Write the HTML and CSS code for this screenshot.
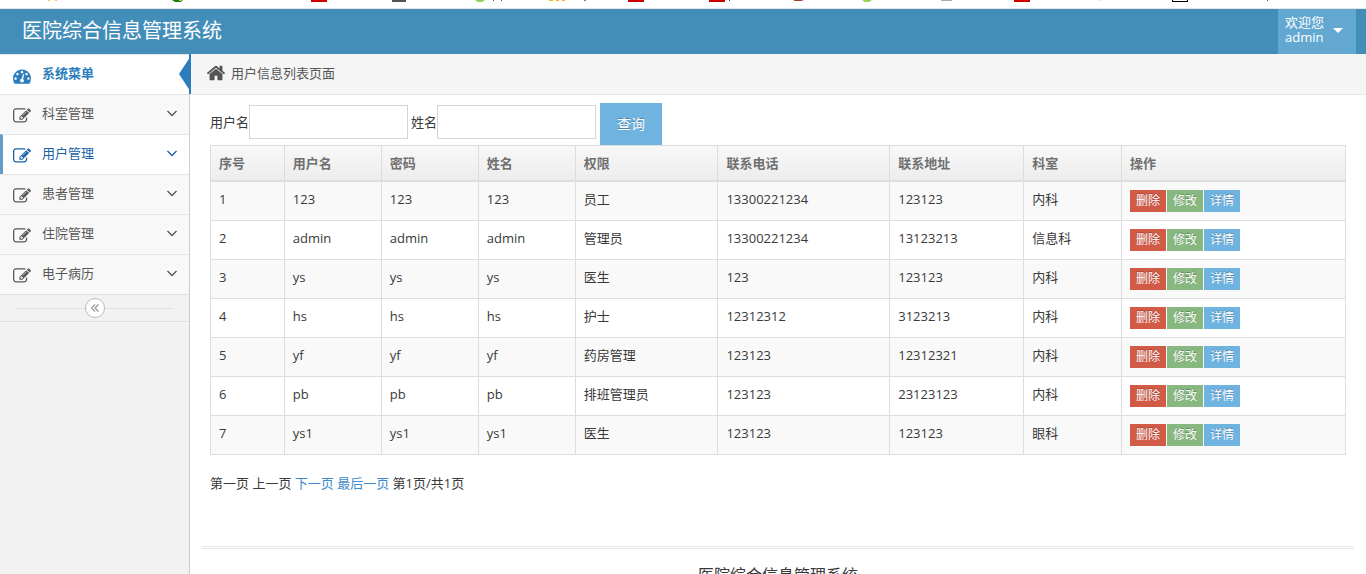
FILE: index.html
```html
<!DOCTYPE html>
<html lang="zh-CN">
<head>
<meta charset="utf-8">
<title>医院综合信息管理系统</title>
<link rel="stylesheet" href="styles.css">
</head>
<body>
<svg class="defs" width="0" height="0" aria-hidden="true">
  <symbol id="i-dash" viewBox="0 0 1792 1792"><path d="M384 1152q0-53-37.500-90.500t-90.500-37.500-90.500 37.500-37.500 90.500 37.500 90.500 90.500 37.500 90.500-37.500 37.500-90.500zm192-448q0-53-37.500-90.500t-90.500-37.500-90.500 37.500-37.500 90.500 37.500 90.500 90.500 37.500 90.500-37.500 37.500-90.500zm428 481l101-382q6-26-7.500-48.500t-38.500-29.500-48 6.500-30 39.500l-101 382q-60 5-107 43.500t-63 98.500q-20 77 20 146t117 89 146-20 89-117q16-60-6-117t-72-91zm660-33q0-53-37.500-90.500t-90.500-37.500-90.500 37.500-37.500 90.500 37.500 90.500 90.500 37.500 90.500-37.500 37.500-90.500zm-640-640q0-53-37.500-90.500t-90.500-37.500-90.500 37.500-37.500 90.500 37.500 90.500 90.500 37.500 90.500-37.500 37.500-90.500zm448 192q0-53-37.500-90.500t-90.500-37.500-90.500 37.500-37.500 90.500 37.500 90.500 90.500 37.500 90.500-37.500 37.500-90.500zm320 448q0 261-141 483-19 29-54 29h-1402q-35 0-54-29-141-221-141-483 0-182 71-348t191-286 286-191 348-71 348 71 286 191 191 286 71 348z"/></symbol>
  <symbol id="i-edit" viewBox="0 0 1792 1792"><path d="M888 1184l116-116-152-152-116 116v56h96v96h56zm440-720q-16-16-33 1l-350 350q-17 17-1 33t33-1l350-350q17-17 1-33zm80 594v190q0 119-84.500 203.500t-203.500 84.500h-832q-119 0-203.500-84.500t-84.500-203.500v-832q0-119 84.500-203.500t203.500-84.500h832q63 0 117 25 15 7 18 23 3 17-9 29l-49 49q-14 14-32 8-23-6-45-6h-832q-66 0-113 47t-47 113v832q0 66 47 113t113 47h832q66 0 113-47t47-113v-126q0-13 9-22l64-64q15-15 35-7t20 29zm-96-738l288 288-672 672h-288v-288zm444 132l-92 92-288-288 92-92q28-28 68-28t68 28l152 152q28 28 28 68t-28 68z"/></symbol>
  <symbol id="i-home" viewBox="0 0 1792 1792"><path d="M1472 992v480q0 26-19 45t-45 19h-384v-384h-256v384h-384q-26 0-45-19t-19-45v-480q0-1 .5-3t.5-3l575-474 575 474q1 2 1 6zm223-69l-62 74q-8 9-21 11h-3q-13 0-21-7l-692-577-692 577q-12 8-24 7-13-2-21-11l-62-74q-8-10-7-23.500t11-21.500l719-599q32-26 76-26t76 26l244 204v-195q0-14 9-23t23-9h192q14 0 23 9t9 23v408l219 182q10 8 11 21.500t-7 23.500z"/></symbol>
  <symbol id="i-down" viewBox="0 0 10 7"><path d="M.5 1L5 5.500 9.500 1" fill="none" stroke="currentColor" stroke-width="1.400"/></symbol>
</svg>

<svg class="strip" width="1366" height="8" aria-hidden="true">
  <path fill="#fcc25c" d="M48 0h2v1h-2zM55 0h2v1h-2z"/>
  <path fill="#1d7a12" d="M172 0h11l-2 2h-6z"/><path fill="#b6cf3c" d="M179 0h4l-2 1h-2z"/>
  <path fill="#c00" d="M311 0h16v2h-16zM628 0h16v2h-16zM709 0h16v2h-16zM1014 0h16v2h-16z"/>
  <path fill="#555" d="M392 0h14v2h-14z"/>
  <path fill="#92d050" d="M475 0h10l-3 2h-4zM862 0h10l-3 2h-4z"/>
  <path fill="#555" d="M493 0h1v1h-1zM501 0h1v1h-1zM1267 0h1v1h-1z"/>
  <path fill="#fbb017" d="M549 0h4v1h-4zM556 0h3v1h-3zM562 0h3v1h-3z"/>
  <path fill="#b07040" d="M584 0h2v1h-2z"/><path fill="#247" d="M729 0h1v1h-1z"/>
  <path fill="#a43d23" d="M793 0h11l-3 1h-6z"/>
  <path fill="#aaa" d="M941 0h11v1h-11z"/><path fill="#eee" d="M1097 0h5v1h-5z"/>
  <path fill="#000" d="M1172 0h1v1h14v-1h1v2h-16z"/>
</svg>

<header class="navbar">
  <div class="brand">医院综合信息管理系统</div>
  <button class="user" type="button"><span>欢迎您<br>admin</span><i class="caret"></i></button>
</header>

<div class="shell">
  <aside class="sidebar">
    <nav class="menu">
      <a class="item current" href="#"><svg class="icon"><use href="#i-dash"/></svg><span>系统菜单</span></a>
      <a class="item" href="#"><svg class="icon"><use href="#i-edit"/></svg><span>科室管理</span><svg class="arrow"><use href="#i-down"/></svg></a>
      <a class="item open" href="#"><svg class="icon"><use href="#i-edit"/></svg><span>用户管理</span><svg class="arrow"><use href="#i-down"/></svg></a>
      <a class="item" href="#"><svg class="icon"><use href="#i-edit"/></svg><span>患者管理</span><svg class="arrow"><use href="#i-down"/></svg></a>
      <a class="item" href="#"><svg class="icon"><use href="#i-edit"/></svg><span>住院管理</span><svg class="arrow"><use href="#i-down"/></svg></a>
      <a class="item" href="#"><svg class="icon"><use href="#i-edit"/></svg><span>电子病历</span><svg class="arrow"><use href="#i-down"/></svg></a>
    </nav>
    <div class="collapse">
      <button type="button" aria-label="收起菜单"><svg width="10" height="10" viewBox="0 0 10 10"><path d="M5 1.500L1.500 5 5 8.500M8.500 1.500L5 5 8.500 8.500" fill="none" stroke="#999" stroke-width="1.300"/></svg></button>
    </div>
  </aside>

  <main class="main">
    <div class="crumbs"><svg class="icon"><use href="#i-home"/></svg><span>用户信息列表页面</span></div>
    <div class="content">
      <form class="search">
        <div class="field"><label for="uname">用户名</label><input id="uname" type="text"></div>
        <div class="field"><label for="rname">姓名</label><input id="rname" type="text"></div>
        <button class="query" type="button">查询</button>
      </form>
      <table class="grid">
        <colgroup><col class="c-no"><col class="c-id"><col class="c-id"><col class="c-id"><col class="c-role"><col class="c-tel"><col class="c-addr"><col class="c-dept"><col></colgroup>
        <thead><tr><th>序号</th><th>用户名</th><th>密码</th><th>姓名</th><th>权限</th><th>联系电话</th><th>联系地址</th><th>科室</th><th>操作</th></tr></thead>
        <tbody>
          <tr><td>1</td><td>123</td><td>123</td><td>123</td><td>员工</td><td>13300221234</td><td>123123</td><td>内科</td><td><div class="ops"><button class="del" type="button">删除</button><button class="mod" type="button">修改</button><button class="info" type="button">详情</button></div></td></tr>
          <tr><td>2</td><td>admin</td><td>admin</td><td>admin</td><td>管理员</td><td>13300221234</td><td>13123213</td><td>信息科</td><td><div class="ops"><button class="del" type="button">删除</button><button class="mod" type="button">修改</button><button class="info" type="button">详情</button></div></td></tr>
          <tr><td>3</td><td>ys</td><td>ys</td><td>ys</td><td>医生</td><td>123</td><td>123123</td><td>内科</td><td><div class="ops"><button class="del" type="button">删除</button><button class="mod" type="button">修改</button><button class="info" type="button">详情</button></div></td></tr>
          <tr><td>4</td><td>hs</td><td>hs</td><td>hs</td><td>护士</td><td>12312312</td><td>3123213</td><td>内科</td><td><div class="ops"><button class="del" type="button">删除</button><button class="mod" type="button">修改</button><button class="info" type="button">详情</button></div></td></tr>
          <tr><td>5</td><td>yf</td><td>yf</td><td>yf</td><td>药房管理</td><td>123123</td><td>12312321</td><td>内科</td><td><div class="ops"><button class="del" type="button">删除</button><button class="mod" type="button">修改</button><button class="info" type="button">详情</button></div></td></tr>
          <tr><td>6</td><td>pb</td><td>pb</td><td>pb</td><td>排班管理员</td><td>123123</td><td>23123123</td><td>内科</td><td><div class="ops"><button class="del" type="button">删除</button><button class="mod" type="button">修改</button><button class="info" type="button">详情</button></div></td></tr>
          <tr><td>7</td><td>ys1</td><td>ys1</td><td>ys1</td><td>医生</td><td>123123</td><td>123123</td><td>眼科</td><td><div class="ops"><button class="del" type="button">删除</button><button class="mod" type="button">修改</button><button class="info" type="button">详情</button></div></td></tr>
        </tbody>
      </table>
      <div class="pager">第一页 上一页 <a href="#">下一页</a> <a href="#">最后一页</a> 第1页/共1页</div>
    </div>
    <footer class="footer">医院综合信息管理系统</footer>
  </main>
</div>
</body>
</html>
```
FILE: styles.css
```css
* { box-sizing: border-box; }

body {
  margin: 0;
  height: 100vh;
  overflow: hidden;
  display: flex;
  flex-direction: column;
  background: #fff;
  color: #393939;
  font: 13px/18px "Open Sans", "Noto Sans CJK SC", sans-serif;
}

button, input { font: inherit; border-radius: 0; }
button { border: 0; padding: 0; cursor: pointer; }
a { color: #428bca; text-decoration: none; }
svg { flex: none; }
.defs { position: absolute; }
.strip { display: block; }

.navbar {
  flex: none;
  display: flex;
  justify-content: space-between;
  height: 46px;
  padding: 0 10px 0 22px;
  border-top: 1px solid #e6e6e6;
  background: #438eb9;
  color: #fff;
}
.brand { font-size: 20px; line-height: 44px; }
.user {
  display: flex;
  align-items: center;
  gap: 9px;
  width: 78px;
  padding: 0 7px 4px;
  background: #62a8d1;
  color: #fff;
  line-height: 15px;
  text-align: left;
}
.caret {
  margin-top: 2px;
  border: 5px solid transparent;
  border-top-color: #fff;
  border-bottom: 0;
}

.shell { flex: 1; display: flex; min-height: 0; }
.sidebar {
  flex: none;
  width: 190px;
  border-right: 1px solid #ccc;
  background: #f2f2f2;
}
.icon { width: 18px; height: 18px; fill: currentColor; }
.item {
  display: flex;
  align-items: center;
  height: 40px;
  padding: 0 12px 2px 13px;
  border-top: 1px solid #e5e5e5;
  background: #f8f8f8;
  color: #585858;
}
.item .icon { margin: 4px 11px 0 0; }
.item span { flex: 1; padding-bottom: 2px; }
.arrow { width: 10px; height: 7px; }
.item.current {
  position: relative;
  background: #fff;
  color: #2b7dbc;
  font-weight: 700;
}
.item.current::after {
  content: "";
  position: absolute;
  top: -1px;
  right: -2px;
  width: 12px;
  height: 40px;
  background: #2b7dbc;
  clip-path: polygon(0 50%, 83% 12%, 83% 0, 100% 0, 100% 100%, 83% 100%, 83% 88%);
}
.item.open {
  padding-left: 10px;
  border-left: 3px solid #629cc9;
  background: #fff;
  color: #1963aa;
}
.collapse {
  display: flex;
  align-items: center;
  height: 28px;
  padding: 0 15px;
  border-top: 1px solid #e0e0e0;
  border-bottom: 1px solid #e0e0e0;
}
.collapse::before, .collapse::after {
  content: "";
  flex: 1;
  height: 1px;
  background: #e0e0e0;
}
.collapse button {
  display: flex;
  align-items: center;
  justify-content: center;
  width: 20px;
  height: 20px;
  border: 1px solid #bbb;
  border-radius: 50%;
  background: #fff;
}

.main { flex: 1; min-width: 0; }
.crumbs {
  display: flex;
  align-items: center;
  gap: 5px;
  height: 41px;
  padding: 0 0 2px 16px;
  border-bottom: 1px solid #e5e5e5;
  background: #f5f5f5;
  color: #555;
}
.crumbs .icon { width: 20px; height: 20px; }
.content { padding: 8px 20px 0; }
.search {
  display: flex;
  align-items: flex-start;
  gap: 3px;
}
.field { display: flex; align-items: center; padding-top: 2px; }
.field input {
  width: 159px;
  height: 34px;
  padding: 5px 4px;
  border: 1px solid #d5d5d5;
  background: #fff;
}
.query {
  width: 62px;
  height: 42px;
  margin-left: 1px;
  background: #6fb3e0;
  color: #fff;
  font-size: 14px;
  text-shadow: 0 -1px 0 rgba(0, 0, 0, 0.25);
}

.grid {
  width: 100%;
  table-layout: fixed;
  border-collapse: collapse;
}
.c-no { width: 6.5%; }
.c-id { width: 8.55%; }
.c-role { width: 12.56%; }
.c-tel { width: 15.14%; }
.c-addr { width: 11.8%; }
.c-dept { width: 8.62%; }
.grid th, .grid td {
  padding: 8px;
  border: 1px solid #ddd;
  text-align: left;
  vertical-align: top;
}
.grid td { padding-bottom: 7px; }
.grid thead tr { background: linear-gradient(#f8f8f8, #ececec); }
.grid th {
  border-bottom-width: 2px;
  color: #707070;
}
.grid tbody tr:nth-child(odd) { background: #f9f9f9; }
.ops { display: flex; gap: 1px; padding-bottom: 1px; }
.ops button {
  width: 36px;
  height: 22px;
  color: #fff;
  font-size: 12px;
  line-height: 22px;
  text-shadow: 0 -1px 0 rgba(0, 0, 0, 0.25);
}
.ops .del { background: #d15b47; }
.ops .mod { background: #87b87f; }
.ops .info { background: #6fb3e0; }
.pager { padding-top: 19px; }

.footer {
  margin: 54px 12px 0;
  padding-top: 12px;
  border-top: 3px double #e5e5e5;
  font-size: 16px;
  line-height: 28px;
  text-align: center;
}
```
